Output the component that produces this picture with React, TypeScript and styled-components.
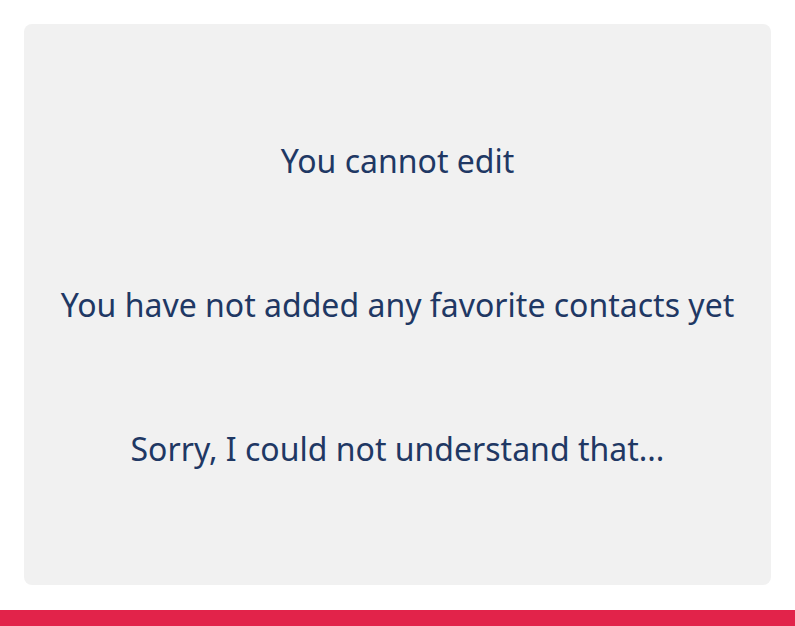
import React from "react"
import styled, { createGlobalStyle } from "styled-components"

const GlobalStyle = createGlobalStyle`
  html, body {
    margin: 0;
    padding: 0;
    background: #ffffff;
  }
  body {
    font-family: "Noto Sans", "Open Sans", sans-serif;
  }
`

const Page = styled.div`
  display: flex;
  flex-direction: column;
  width: 795px;
  height: 626px;
  overflow: hidden;
`

const Panel = styled.section`
  margin: 24px 24px 0;
  height: 561px;
  background: #f1f1f1;
  border-radius: 8px;
  display: flex;
  flex-direction: column;
  align-items: center;
  justify-content: center;
  gap: 100px;
`

const Message = styled.p`
  margin: 0;
  height: 44px;
  line-height: 44px;
  font-size: 32px;
  color: #1f3864;
  text-align: center;
`

const FooterBar = styled.div`
  margin-top: 25px;
  height: 16px;
  background: #e2234a;
`

const messages = [
  "You cannot edit",
  "You have not added any favorite contacts yet",
  "Sorry, I could not understand that...",
]

export default function App() {
  return (
    <>
      <GlobalStyle />
      <Page>
        <Panel>
          {messages.map((m) => (
            <Message key={m}>{m}</Message>
          ))}
        </Panel>
        <FooterBar />
      </Page>
    </>
  )
}
